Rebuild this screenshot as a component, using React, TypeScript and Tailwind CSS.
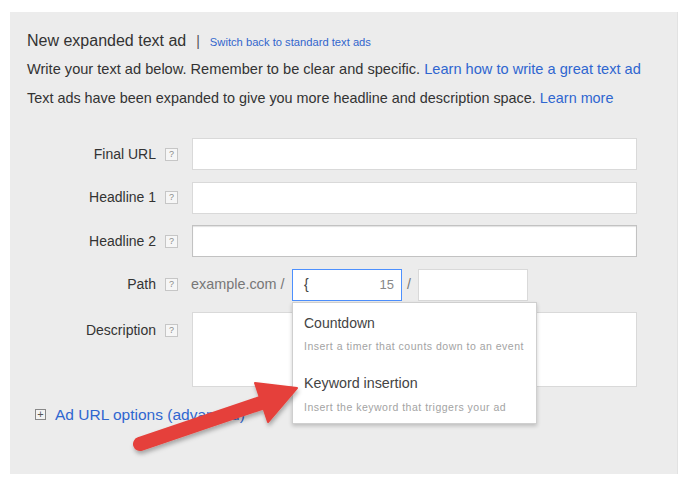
import React from 'react';

const Help = () => (
    <span className="w-[13px] h-[13px] border border-[#c6c6c6] bg-[#f6f6f6] text-[#8a8a8a] text-[9px] leading-[11px] flex items-center justify-center shrink-0">
        ?
    </span>
);

const Label = ({ text }: { text: string }) => (
    <div className="w-[151px] flex items-center justify-end gap-[9px] shrink-0">
        <span className="text-[14px] text-[#333]">{text}</span>
        <Help />
    </div>
);

const Field = ({ className = '' }: { className?: string }) => (
    <div className={`h-[32px] bg-white border ${className}`} />
);

export default function App() {
    return (
        <div className="w-[692px] h-[491px] bg-white pt-[12px] pl-[10px]" style={{ fontFamily: '"Liberation Sans", Arial, sans-serif' }}>
            <div className="relative w-[668px] h-[462px] bg-[#ececec] border-r border-[#e2e2e2] pl-[17px] pt-[17px]">
                {/* Header */}
                <div className="flex items-baseline h-[22px]">
                    <span className="text-[16px] text-[#333]">New expanded text ad</span>
                    <span className="text-[14px] text-[#555] ml-[10px] mr-[10px]">|</span>
                    <span className="text-[11.2px] text-[#3266cc]">Switch back to standard text ads</span>
                </div>
                <div className="text-[14.6px] text-[#333] mt-[8px] leading-[20px]">
                    Write your text ad below. Remember to be clear and specific. <span className="text-[#2f66d0]">Learn how to write a great text ad</span>
                </div>
                <div className="text-[14.4px] text-[#333] mt-[9px] leading-[20px]">
                    Text ads have been expanded to give you more headline and description space. <span className="text-[#2f66d0]">Learn more</span>
                </div>

                {/* Form */}
                <div className="flex flex-col gap-[11.5px] mt-[30px]">
                    <div className="flex items-center gap-[14px]">
                        <Label text="Final URL" />
                        <Field className="w-[445px] border-[#d9d9d9]" />
                    </div>
                    <div className="flex items-center gap-[14px]">
                        <Label text="Headline 1" />
                        <Field className="w-[445px] border-[#d9d9d9]" />
                    </div>
                    <div className="flex items-center gap-[14px]">
                        <Label text="Headline 2" />
                        <Field className="w-[445px] border-[#c2c2c2] shadow-[inset_0_1px_1px_rgba(0,0,0,0.12)]" />
                    </div>
                    <div className="flex items-center gap-[13px]">
                        <Label text="Path" />
                        <div className="relative flex items-center">
                            <span className="text-[14.4px] text-[#777] w-[101px]">example.com /</span>
                            <div className="relative w-[110px] h-[32px] bg-white border border-[#4d90fe] flex items-center justify-between pl-[11px] pr-[7px]">
                                <span className="text-[14px] text-[#444]">{'{'}</span>
                                <span className="text-[13px] text-[#888]">15</span>
                                {/* Dropdown */}
                                <div className="absolute left-[-1px] top-[32px] w-[245px] h-[122px] bg-white border border-[#cfcfcf] shadow-[0_2px_4px_rgba(0,0,0,0.2)] z-10 px-[11px] pt-[10px] whitespace-nowrap">
                                    <div className="text-[14px] text-[#444]">Countdown</div>
                                    <div className="text-[10.5px] tracking-[0.5px] text-[#a3a3a3] mt-[5px]">Insert a timer that counts down to an event</div>
                                    <div className="text-[14.3px] text-[#444] mt-[19px]">Keyword insertion</div>
                                    <div className="text-[10.5px] tracking-[0.5px] text-[#a3a3a3] mt-[5px]">Insert the keyword that triggers your ad</div>
                                </div>
                            </div>
                            <span className="text-[14px] text-[#777] ml-[5px] mr-[7px]">/</span>
                            <Field className="w-[110px] border-[#d9d9d9]" />
                        </div>
                    </div>
                    <div className="flex items-start gap-[14px]">
                        <div className="pt-[8px]">
                            <Label text="Description" />
                        </div>
                        <div className="w-[445px] h-[75px] bg-white border border-[#d9d9d9]" />
                    </div>
                </div>

                <div className="flex items-center mt-[16px] ml-[8px] gap-[9px]">
                    <span className="w-[11px] h-[11px] border border-[#888] bg-[#f3f3f3] text-[#555] text-[11px] leading-[9px] flex items-center justify-center">+</span>
                    <span className="text-[15.5px] text-[#2f66d0]">Ad URL options (advanced)</span>
                </div>

                {/* Red arrow */}
                <svg className="absolute left-0 top-0 z-20 pointer-events-none" width="668" height="462" viewBox="0 0 668 462">
                    <defs>
                        <filter id="sh" x="-10%" y="-10%" width="130%" height="140%">
                            <feDropShadow dx="1" dy="3" stdDeviation="2" floodColor="#000" floodOpacity="0.3" />
                        </filter>
                    </defs>
                    <g filter="url(#sh)" fill="#e5413b" stroke="#e5413b">
                        <line x1="130" y1="432" x2="254" y2="390" strokeWidth="14" strokeLinecap="round" />
                        <polygon points="287,376 245,371 258,410" strokeWidth="2" strokeLinejoin="round" />
                    </g>
                </svg>
            </div>
        </div>
    );
}
